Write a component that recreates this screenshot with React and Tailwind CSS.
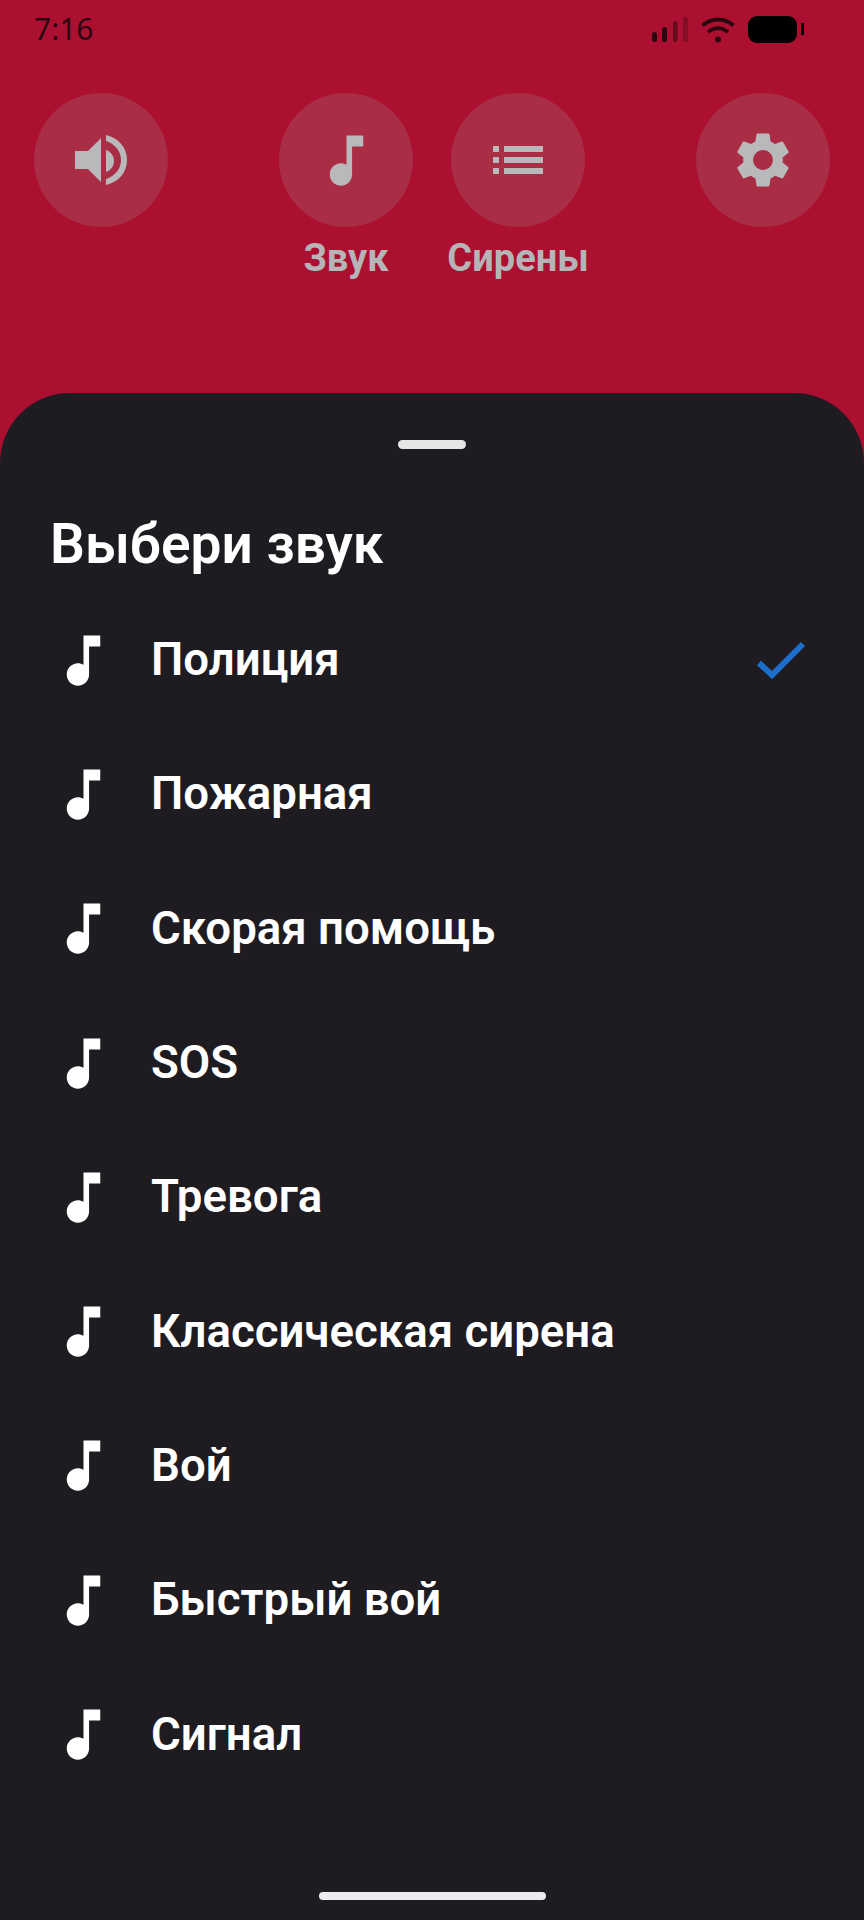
const roboto = { fontFamily: 'Roboto, "Noto Sans", sans-serif' };

const NOTE = "M12 3v10.55c-.59-.34-1.27-.55-2-.55-2.21 0-4 1.79-4 4s1.79 4 4 4 4-1.79 4-4V7h4V3h-6z";
const GEAR = "M19.14 12.94c.04-.3.06-.61.06-.94 0-.32-.02-.64-.07-.94l2.03-1.58a.49.49 0 0 0 .12-.61l-1.92-3.32a.488.488 0 0 0-.59-.29l-2.39.96c-.5-.38-1.03-.7-1.62-.94l-.36-2.54a.484.484 0 0 0-.48-.41h-3.84c-.24 0-.43.17-.47.41l-.36 2.54c-.59.24-1.13.57-1.62.94l-2.39-.96c-.22-.08-.47 0-.59.22L2.74 8.87c-.12.21-.08.47.12.61l2.03 1.58c-.05.3-.09.63-.09.94s.02.64.07.94l-2.03 1.58a.49.49 0 0 0-.12.61l1.92 3.32c.12.22.37.29.59.22l2.39-.96c.5.38 1.03.7 1.62.94l.36 2.54c.05.24.24.41.48.41h3.84c.24 0 .44-.17.47-.41l.36-2.54c.59-.24 1.13-.56 1.62-.94l2.39.96c.22.08.47 0 .59-.22l1.92-3.32c.12-.22.07-.47-.12-.61l-2.01-1.58zM12 15.6c-1.98 0-3.6-1.62-3.6-3.6s1.62-3.6 3.6-3.6 3.6 1.62 3.6 3.6-1.62 3.6-3.6 3.6z";

function Icon({ d, className }) {
  return (
    <svg viewBox="0 0 24 24" className={className} fill="currentColor">
      <path d={d} fillRule="evenodd" />
    </svg>
  );
}

function Volume() {
  return (
    <svg viewBox="0 0 134 134" className="w-[134px] h-[134px]" fill="currentColor">
      <path d="M41 58h13l13-13v44L54 76H41z" />
      <path d="M72 57c5 2 8 6 8 11s-3 9-8 11z" />
      <path d="M72 42c13 3 21 13 21 25s-8 22-21 25v-6c9-3 15-10 15-19s-6-16-15-19z" />
    </svg>
  );
}

function ListIcon() {
  return (
    <svg viewBox="0 0 134 134" className="w-[134px] h-[134px]" fill="currentColor">
      <rect x="42" y="53" width="6" height="6" />
      <rect x="42" y="64" width="6" height="6" />
      <rect x="42" y="75" width="6" height="6" />
      <rect x="53" y="53" width="39" height="6" />
      <rect x="53" y="64" width="39" height="6" />
      <rect x="53" y="75" width="39" height="6" />
    </svg>
  );
}

function CircleButton({ children, label }) {
  return (
    <div className="relative w-[134px] h-[134px] rounded-full bg-[#aa2d46] flex items-center justify-center text-[#b9b9bb]">
      {children}
      {label && (
        <span className="absolute top-[142px] left-1/2 -translate-x-1/2 whitespace-nowrap text-[38px] leading-[46px] font-bold text-[#b5b5b8]">
          {label}
        </span>
      )}
    </div>
  );
}

function StatusBar() {
  return (
    <div className="h-[60px] pl-[34px] pr-[60px] flex items-start justify-between text-[#2a0710]">
      <span className="text-[30px] leading-[30px] mt-[14px]" style={{ fontFamily: '"Noto Sans", sans-serif' }}>7:16</span>
      <div className="flex items-start">
        <svg viewBox="0 0 36 26" className="w-[36px] h-[26px] mt-[17px] mr-[13px]" fill="currentColor">
          <rect x="0" y="15" width="5" height="10" rx="2.5" />
          <rect x="10" y="10" width="5" height="15" rx="2.5" />
          <rect x="21" y="4" width="4.5" height="21" rx="2.25" opacity="0.55" />
          <rect x="31" y="0" width="5" height="25" rx="2.5" opacity="0.3" />
        </svg>
        <svg viewBox="0 0 34 26" className="w-[34px] h-[26px] mt-[17px] mr-[13px]" fill="none" stroke="currentColor" strokeWidth="3.8">
          <path d="M1.5 8.5c9.5-8 21.5-8 31 0" />
          <path d="M7 15c6.5-5 13.5-5 20 0" />
          <circle cx="17" cy="22.5" r="3" fill="currentColor" stroke="none" />
        </svg>
        <div className="w-[49px] h-[27px] mt-[16px] rounded-[9px] bg-black" />
        <div className="w-[3px] h-[12px] mt-[23px] ml-[4px] bg-black" />
      </div>
    </div>
  );
}

const items = ["Полиция", "Пожарная", "Скорая помощь", "SOS", "Тревога", "Классическая сирена", "Вой", "Быстрый вой", "Сигнал"];

export default function App() {
  return (
    <div style={roboto} className="w-[864px] h-[1920px] bg-[#ac1030] overflow-hidden flex flex-col">
      <StatusBar />
      <div className="h-[333px] pt-[33px] pl-[34px] pr-[34px] flex items-start justify-between">
        <CircleButton><Volume /></CircleButton>
        <div className="flex gap-[38px]">
          <CircleButton label="Звук"><Icon d={NOTE} className="w-[67px] h-[67px]" /></CircleButton>
          <CircleButton label="Сирены"><ListIcon /></CircleButton>
        </div>
        <CircleButton><Icon d={GEAR} className="w-[66px] h-[66px]" /></CircleButton>
      </div>
      <div className="flex-1 bg-[#1e1c21] rounded-t-[70px] flex flex-col">
        <div className="w-[68px] h-[9px] rounded-full bg-[#e6e6e8] self-center mt-[47px]" />
        <h1 className="text-[55px] leading-[64px] font-semibold text-white ml-[50px] mt-[63px]">Выбери звук</h1>
        <ul className="mt-[17px] pl-[50px] pr-[56px]">
          {items.map((t, i) => (
            <li key={t} className="h-[134.3px] flex items-center text-white">
              <Icon d={NOTE} className="w-[67px] h-[67px] shrink-0" />
              <span className="ml-[34px] flex-1 text-[45.6px] leading-[54px] font-semibold">{t}</span>
              {i === 0 && (
                <svg viewBox="0 0 54 40" className="w-[54px] h-[40px]" fill="none" stroke="#1b6ec9" strokeWidth="6">
                  <path d="M5 23l13 12L49 4" />
                </svg>
              )}
            </li>
          ))}
        </ul>
        <div className="w-[227px] h-[8px] rounded-full bg-[#ececee] self-center mt-auto mb-[20px]" />
      </div>
    </div>
  );
}
